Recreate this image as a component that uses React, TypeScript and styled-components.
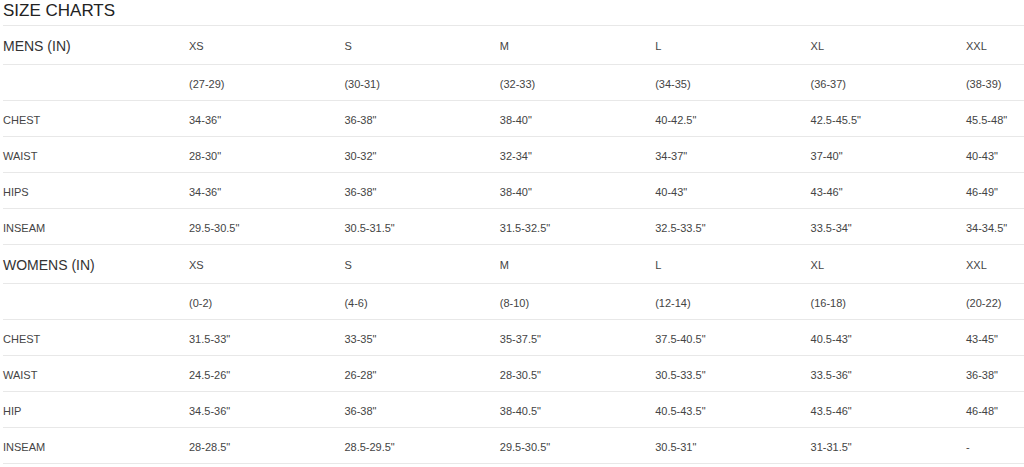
import React, { FC, ReactElement } from 'react';
import styled, { createGlobalStyle } from 'styled-components';

interface RowProps {
  head?: boolean;
};

interface ChartRow {
  label: string;
  values: string[];
};

interface Chart {
  title: string;
  sizes: string[];
  ranges: string[];
  rows: ChartRow[];
};

const GlobalStyle = createGlobalStyle`
  body {
    margin: 0;
    background: #fff;
    font-family: "Liberation Sans", Arial, sans-serif;
  }
`;

const Page = styled.div`
  width: 1024px;
  padding-left: 3px;
  box-sizing: border-box;
  overflow: hidden;
`;

const Title = styled.h2`
  margin: 0;
  height: 25px;
  line-height: 21px;
  font-size: 17px;
  font-weight: 400;
  color: #222;
  border-bottom: 1px solid #e8e8e8;
`;

const Row = styled.div<RowProps>`
  display: grid;
  grid-template-columns: 186px repeat(5, 155.4px) 1fr;
  align-items: center;
  height: ${({ head }) => (head ? '36px' : '33px')};
  padding-top: 2px;
  border-bottom: 1px solid #e8e8e8;
`;

const Label = styled.div<RowProps>`
  font-size: ${({ head }) => (head ? '14px' : '11px')};
  color: ${({ head }) => (head ? '#333' : '#444')};
  white-space: nowrap;
`;

const Cell = styled.div`
  font-size: 11px;
  color: #444;
  white-space: nowrap;
`;

const charts: Chart[] = [
  {
    title: 'MENS (IN)',
    sizes: ['XS', 'S', 'M', 'L', 'XL', 'XXL'],
    ranges: ['(27-29)', '(30-31)', '(32-33)', '(34-35)', '(36-37)', '(38-39)'],
    rows: [
      { label: 'CHEST', values: ['34-36"', '36-38"', '38-40"', '40-42.5"', '42.5-45.5"', '45.5-48"'] },
      { label: 'WAIST', values: ['28-30"', '30-32"', '32-34"', '34-37"', '37-40"', '40-43"'] },
      { label: 'HIPS', values: ['34-36"', '36-38"', '38-40"', '40-43"', '43-46"', '46-49"'] },
      { label: 'INSEAM', values: ['29.5-30.5"', '30.5-31.5"', '31.5-32.5"', '32.5-33.5"', '33.5-34"', '34-34.5"'] },
    ],
  },
  {
    title: 'WOMENS (IN)',
    sizes: ['XS', 'S', 'M', 'L', 'XL', 'XXL'],
    ranges: ['(0-2)', '(4-6)', '(8-10)', '(12-14)', '(16-18)', '(20-22)'],
    rows: [
      { label: 'CHEST', values: ['31.5-33"', '33-35"', '35-37.5"', '37.5-40.5"', '40.5-43"', '43-45"'] },
      { label: 'WAIST', values: ['24.5-26"', '26-28"', '28-30.5"', '30.5-33.5"', '33.5-36"', '36-38"'] },
      { label: 'HIP', values: ['34.5-36"', '36-38"', '38-40.5"', '40.5-43.5"', '43.5-46"', '46-48"'] },
      { label: 'INSEAM', values: ['28-28.5"', '28.5-29.5"', '29.5-30.5"', '30.5-31"', '31-31.5"', '-'] },
    ],
  },
];

const Cells: FC<{ values: string[] }> = ({ values }): ReactElement =>
  <>
    {values.map((v, i) => <Cell key={i}>{v}</Cell>)}
  </>

const App: FC = (): ReactElement =>
  <Page>
    <GlobalStyle />
    <Title>SIZE CHARTS</Title>
    {charts.map(chart =>
      <React.Fragment key={chart.title}>
        <Row head>
          <Label head>{chart.title}</Label>
          <Cells values={chart.sizes} />
        </Row>
        <Row>
          <Label />
          <Cells values={chart.ranges} />
        </Row>
        {chart.rows.map(row =>
          <Row key={row.label}>
            <Label>{row.label}</Label>
            <Cells values={row.values} />
          </Row>
        )}
      </React.Fragment>
    )}
  </Page>

export default App;
